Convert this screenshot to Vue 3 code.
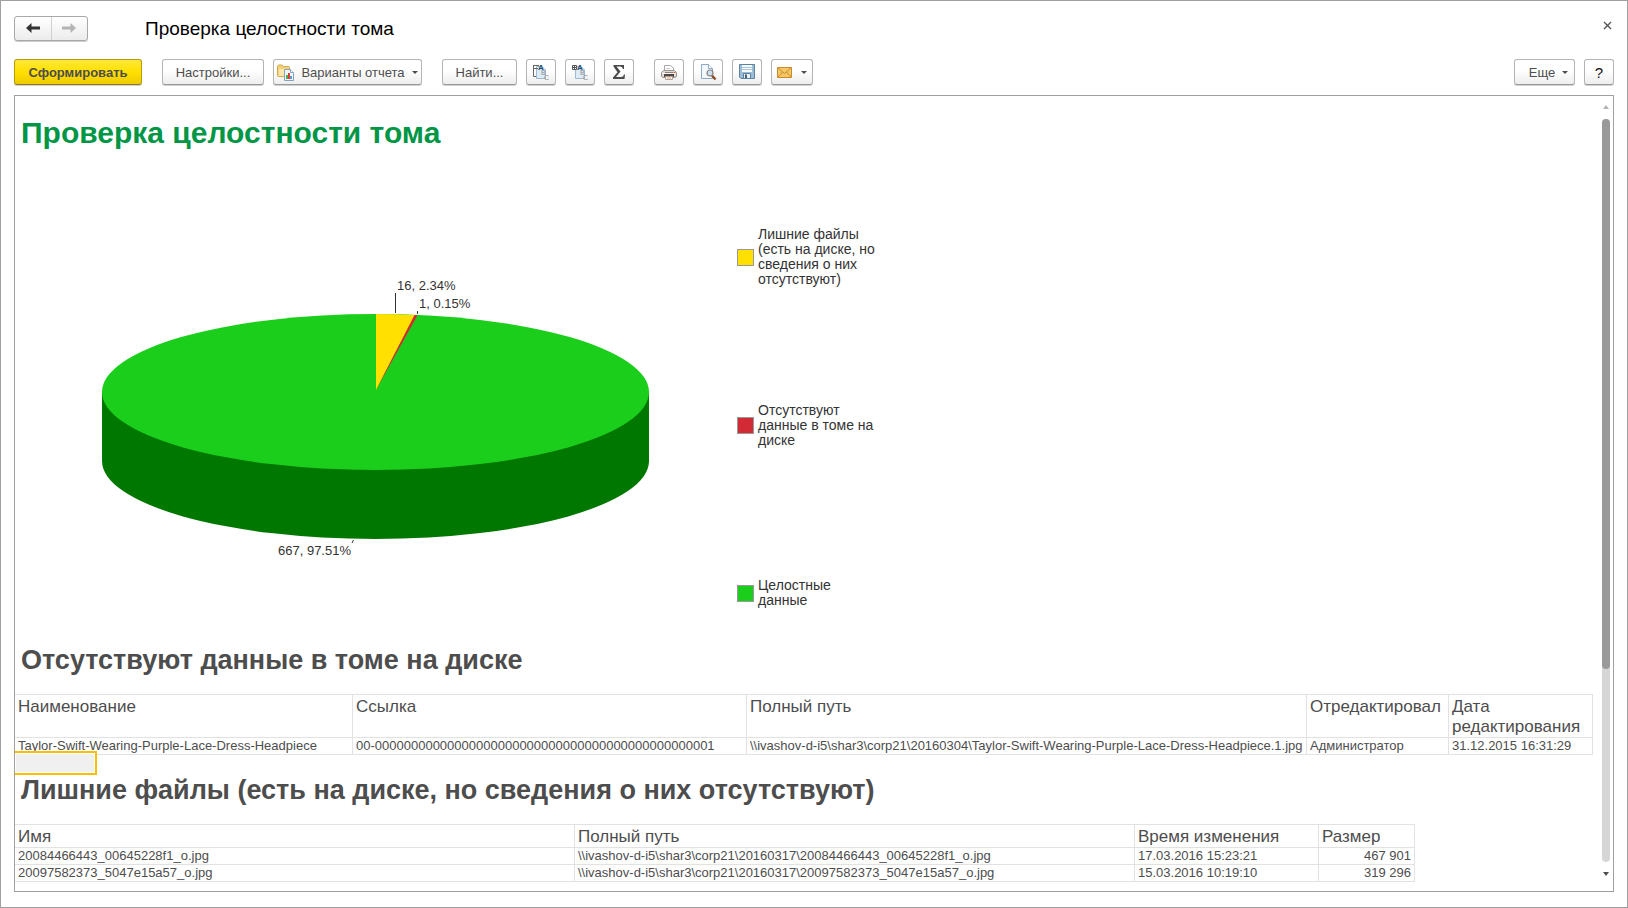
<script setup>
const legend = [
  { id: 'extra', text: 'Лишние файлы (есть на диске, но сведения о них отсутствуют)' },
  { id: 'missing', text: 'Отсутствуют данные в томе на диске' },
  { id: 'whole', text: 'Целостные данные' },
]

const missing = [
  {
    name: 'Taylor-Swift-Wearing-Purple-Lace-Dress-Headpiece',
    link: '00-00000000000000000000000000000000000000000000001',
    path: '\\\\ivashov-d-i5\\shar3\\corp21\\20160304\\Taylor-Swift-Wearing-Purple-Lace-Dress-Headpiece.1.jpg',
    editor: 'Администратор',
    date: '31.12.2015 16:31:29',
  },
]

const extra = [
  {
    name: '20084466443_00645228f1_o.jpg',
    path: '\\\\ivashov-d-i5\\shar3\\corp21\\20160317\\20084466443_00645228f1_o.jpg',
    time: '17.03.2016 15:23:21',
    size: '467 901',
  },
  {
    name: '20097582373_5047e15a57_o.jpg',
    path: '\\\\ivashov-d-i5\\shar3\\corp21\\20160317\\20097582373_5047e15a57_o.jpg',
    time: '15.03.2016 10:19:10',
    size: '319 296',
  },
]
</script>

<template>
  <div class="window">
    <header class="titlebar">
      <div class="nav">
        <button class="nav-btn" type="button" aria-label="Назад">
          <svg width="16" height="12" viewBox="0 0 16 12"><path d="M1 6 6.500 1V4.500H15V7.500H6.500V11Z" fill="#333" /></svg>
        </button>
        <button class="nav-btn" type="button" aria-label="Вперед" disabled>
          <svg width="16" height="12" viewBox="0 0 16 12"><path d="M15 6 9.500 1V4.500H1V7.500H9.500V11Z" fill="#b4b4b4" /></svg>
        </button>
      </div>
      <div class="title">Проверка целостности тома</div>
      <button class="close" type="button" aria-label="Закрыть">
        <svg width="9" height="9" viewBox="0 0 9 9"><path d="M1 1 8 8M8 1 1 8" stroke="#555" stroke-width="1.400" /></svg>
      </button>
    </header>

    <div class="toolbar">
      <button class="btn primary" type="button">Сформировать</button>
      <button class="btn settings" type="button">Настройки...</button>
      <button class="btn variants" type="button">
        <svg width="17" height="17" viewBox="0 0 17 17">
          <path d="M.5 2.500Q.5 1 2 1H5L6.500 2.500H11.500Q12.500 2.500 12.500 3.500V12.500H1.500Q.5 12.500.5 11.500Z" fill="#f3d078" stroke="#d3aa50" />
          <path d="M2 5H12V12H2Z" fill="#fbe8ae" />
          <path d="M7.500 5.500H13.500L16.500 8.500V16.500H7.500Z" fill="#eef5fb" stroke="#86a3c0" />
          <path d="M13.500 5.500V8.500H16.500" fill="#fff" stroke="#86a3c0" />
          <path d="M9 11H11V15H9Z" fill="#4caf50" />
          <path d="M11 9H13V15H11Z" fill="#e03c31" />
          <path d="M13 12H15V15H13Z" fill="#5b9bd5" />
        </svg>
        <span>Варианты отчета</span>
        <i class="caret"></i>
      </button>
      <button class="btn find" type="button">Найти...</button>
      <div class="group">
        <button class="btn icon" type="button" aria-label="Развернуть группы">
          <svg class="letters" width="18" height="18" viewBox="0 0 18 18">
            <path d="M4.500 3.500H10L13.500 7V15.500H4.500Z" fill="#dcebf7" stroke="#9dbad2" />
            <path d="M1 2.500H7M1.500 2V13.500H4M1 5.500H6" fill="none" stroke="#666" />
            <text class="a" x="6" y="7">A</text>
            <text x="9" y="12">B</text>
            <text x="12" y="17">C</text>
          </svg>
        </button>
        <button class="btn icon" type="button" aria-label="Свернуть группы">
          <svg class="letters" width="18" height="18" viewBox="0 0 18 18">
            <path d="M4.500 3.500H10L13.500 7V15.500H4.500Z" fill="#dcebf7" stroke="#9dbad2" />
            <path d="M1.500 2.500H5.500V6.500H1.500ZM3.500 2V7M1 4.500H6" fill="#fff" stroke="#555" />
            <text class="a" x="6" y="7">A</text>
            <text x="9" y="12">B</text>
            <text x="12" y="17">C</text>
          </svg>
        </button>
        <button class="btn icon" type="button" aria-label="Сумма">
          <svg width="14" height="16" viewBox="0 0 14 16">
            <path d="M1.500 1H12V5H11Q10.500 2.500 8.500 2.500H4.500L8.500 7.500L4 13H9Q11.500 13 12 10.500H13L12.500 15H1V13.500L5.500 8.200L1.500 2.500Z" fill="#4a4a4a" />
          </svg>
        </button>
      </div>
      <div class="group output">
        <button class="btn icon" type="button" aria-label="Печать">
          <svg width="16" height="16" viewBox="0 0 16 16">
            <path d="M3.500 7V1.500H9.500L12.500 4V7" fill="#fff" stroke="#a8a8a8" />
            <path d="M5 4.500H9M5 6.500H11" stroke="#ccc" />
            <path d="M2.500 6.500H13.500L15.500 8.500V12.500L14 13.500H2L.5 12.500V8.500Z" fill="#dedad5" stroke="#98928b" />
            <path d="M1 9.500H15" stroke="#f6f4f1" />
            <path d="M4 8.500H12" stroke="#8d7f74" />
            <path d="M3 10H13V13H3Z" fill="#4f4743" />
            <path d="M4.500 12.500H11.500V15.500H4.500Z" fill="#fff" stroke="#b3a59a" />
            <path d="M6 14H10" stroke="#e8956a" />
            <path d="M12.500 8.500H14.500" stroke="#e0622a" />
          </svg>
        </button>
        <button class="btn icon" type="button" aria-label="Предварительный просмотр">
          <svg width="17" height="17" viewBox="0 0 17 17">
            <path d="M1.500.5H8.500L12.500 4.500V14.500H1.500Z" fill="#f4f9fd" stroke="#8ba9c4" />
            <path d="M8.500.5V4.500H12.500" fill="#fff" stroke="#8ba9c4" />
            <path d="M12 11.500 15.500 15.500" stroke="#8a4b22" stroke-width="2.400" />
            <circle cx="10" cy="9" r="3" fill="#c8e2f5" stroke="#8b7f78" stroke-width="1.200" />
          </svg>
        </button>
        <button class="btn icon" type="button" aria-label="Сохранить">
          <svg width="16" height="16" viewBox="0 0 16 16">
            <path d="M.5.5H15.500V14.500H2L.5 13Z" fill="#9dbdd6" stroke="#5b82a2" />
            <path d="M3 1H13V8H3Z" fill="#f6fafd" />
            <path d="M3 3.500H13M3 5.500H13" stroke="#a9c6dc" />
            <path d="M4.500 9.500H11.500V14.500H4.500Z" fill="#eef2f5" stroke="#5b82a2" />
            <path d="M6 10.500H8V14H6Z" fill="#3d617e" />
          </svg>
        </button>
        <button class="btn mail" type="button" aria-label="Отправить">
          <svg width="15" height="11" viewBox="0 0 15 11">
            <path d="M.5.5H14.500V10.500H.5Z" fill="#f7c766" stroke="#c98a2b" />
            <path d="M1 1 7.500 6.500 14 1M1 10 5.500 5M14 10 9.500 5" fill="none" stroke="#c98a2b" />
          </svg>
          <i class="caret"></i>
        </button>
      </div>
      <div class="group right">
        <button class="btn more" type="button"><span>Еще</span><i class="caret"></i></button>
        <button class="btn icon help" type="button">?</button>
      </div>
    </div>

    <main class="report">
      <div class="sheet">
        <h1>Проверка целостности тома</h1>

        <section class="chart">
          <svg class="pie" width="664" height="489" viewBox="0 0 664 489">
            <path d="M87 241V310A273.500 78 0 0 0 634 310V241Z" fill="#007800" />
            <ellipse cx="360.500" cy="241" rx="273.500" ry="78" fill="#1bce1b" />
            <path d="M361 239V163Q381 163 400 164Z" fill="#ffe000" />
            <path d="M361 239 399.500 164 402.500 164.300Z" fill="#d22b35" />
            <path d="M380.500 142V162M402.500 160V163M338.500 389 337 392" stroke="#333" fill="none" />
            <text x="382" y="139">16, 2.34%</text>
            <text x="404" y="157">1, 0.15%</text>
            <text x="336" y="404" text-anchor="end">667, 97.51%</text>
          </svg>
          <ul class="legend">
            <li v-for="item in legend" :key="item.id">
              <i class="swatch" :class="item.id"></i>
              <span>{{ item.text }}</span>
            </li>
          </ul>
        </section>

        <h2>Отсутствуют данные в томе на диске</h2>
        <table class="missing-table">
          <colgroup><col class="c338" /><col class="c394" /><col class="c560" /><col class="c142" /><col class="c144" /></colgroup>
          <thead>
            <tr><th>Наименование</th><th>Ссылка</th><th>Полный путь</th><th>Отредактировал</th><th>Дата редактирования</th></tr>
          </thead>
          <tbody>
            <tr v-for="row in missing" :key="row.link">
              <td>{{ row.name }}</td><td>{{ row.link }}</td><td>{{ row.path }}</td><td>{{ row.editor }}</td><td>{{ row.date }}</td>
            </tr>
          </tbody>
        </table>

        <div class="gap-row"><div class="selection"></div></div>

        <h2>Лишние файлы (есть на диске, но сведения о них отсутствуют)</h2>
        <table class="extra-table">
          <colgroup><col class="c560" /><col class="c560" /><col class="c184" /><col class="c96" /></colgroup>
          <thead>
            <tr><th>Имя</th><th>Полный путь</th><th>Время изменения</th><th>Размер</th></tr>
          </thead>
          <tbody>
            <tr v-for="row in extra" :key="row.name">
              <td>{{ row.name }}</td><td>{{ row.path }}</td><td>{{ row.time }}</td><td class="num">{{ row.size }}</td>
            </tr>
          </tbody>
        </table>
      </div>

      <div class="scrollbar">
        <i class="arrow up"></i>
        <div class="track"><div class="thumb"></div></div>
        <i class="arrow down"></i>
      </div>
    </main>
  </div>
</template>

<style>
body {
  margin: 0;
}
</style>

<style scoped>
.window {
  box-sizing: border-box;
  height: 100vh;
  padding: 14px 13px 15px;
  border: 1px solid #a0a0a0;
  background: #fff;
  color: #4d4d4d;
  display: flex;
  flex-direction: column;
  font-family: "Liberation Sans", Arial, sans-serif;
  font-size: 13px;
}

button {
  font: inherit;
  color: inherit;
  padding: 0;
}

.titlebar {
  display: flex;
  align-items: center;
  height: 26px;
}

.nav {
  display: flex;
  box-sizing: border-box;
  width: 74px;
  height: 25px;
  border: 1px solid #a8a8a8;
  border-radius: 3px;
  background: linear-gradient(#fff, #ececec);
  box-shadow: 0 1px 0 #ccc;
}

.nav-btn {
  flex: 1;
  display: flex;
  align-items: center;
  justify-content: center;
  border: 0;
  background: none;
}

.nav-btn + .nav-btn {
  border-left: 1px solid #d0d0d0;
}

.title {
  flex: 1;
  margin-left: 57px;
  padding-top: 2px;
  color: #000;
  font-size: 19px;
  line-height: 24px;
}

.close {
  display: flex;
  margin: 0 2px 6px 0;
  border: 0;
  background: none;
}

.toolbar {
  display: flex;
  margin-top: 18px;
}

.btn {
  display: flex;
  align-items: center;
  justify-content: center;
  box-sizing: border-box;
  height: 26px;
  border: 1px solid #b4b4b4;
  border-bottom-color: #989898;
  border-radius: 3px;
  background: linear-gradient(#fff 40%, #eee);
  box-shadow: 0 1px 0 #d0d0d0;
  white-space: nowrap;
}

.primary {
  width: 128px;
  border-color: #b89c10;
  border-bottom-color: #8c7a20;
  background: linear-gradient(#ffe838, #ffe000 50%, #efca00);
  font-weight: bold;
}

.settings {
  width: 102px;
  margin-left: 20px;
}

.variants {
  gap: 7px;
  width: 149px;
  margin-left: 9px;
}

.find {
  width: 75px;
  margin-left: 20px;
}

.group {
  display: flex;
  gap: 9px;
  margin-left: 9px;
}

.output {
  margin-left: 20px;
}

.right {
  margin-left: auto;
}

.icon {
  width: 30px;
}

.letters text {
  fill: #8c8c8c;
  font-size: 7px;
}

.letters .a {
  fill: #1d4a73;
  font-size: 8px;
  font-weight: bold;
}

.mail {
  gap: 9px;
  width: 42px;
}

.more {
  gap: 7px;
  width: 61px;
  padding-left: 8px;
}

.help {
  color: #111;
  font-size: 15px;
}

.caret {
  border: 3px solid transparent;
  border-top-color: #4d4d4d;
  border-bottom: 0;
}

.report {
  flex: 1;
  display: flex;
  min-height: 0;
  margin-top: 10px;
  border: 1px solid #a0a0a0;
}

.sheet {
  flex: 1;
  min-width: 0;
  overflow: hidden;
}

h1,
h2 {
  margin: 0;
  padding-left: 6px;
  line-height: 36px;
  white-space: nowrap;
}

h1 {
  padding-top: 19px;
  color: #009646;
  font-size: 30px;
}

h2 {
  margin-bottom: 16px;
  padding-top: 1px;
  font-size: 27px;
}

.chart {
  display: flex;
  gap: 58px;
  height: 490px;
}

.pie {
  flex: none;
}

.pie text {
  fill: #333;
  font-size: 13px;
}

.legend {
  display: grid;
  grid-template-rows: repeat(3, 168px);
  width: 141px;
  margin: 0;
  padding: 22px 0 0;
  list-style: none;
  color: #333;
  font-size: 14px;
  line-height: 15px;
}

.legend li {
  display: flex;
  align-items: center;
  gap: 4px;
}

.swatch {
  flex: none;
  box-sizing: border-box;
  width: 17px;
  height: 17px;
  border: 1px solid #999;
}

.extra {
  background: #ffe000;
}

.missing {
  background: #d22b35;
}

.whole {
  background: #1bce1b;
}

table {
  table-layout: fixed;
  border-spacing: 0;
  border-top: 1px solid #e2e2e2;
}

.missing-table {
  width: 1578px;
}

.extra-table {
  width: 1400px;
}

.c96 { width: 96px; }
.c142 { width: 142px; }
.c144 { width: 144px; }
.c184 { width: 184px; }
.c338 { width: 338px; }
.c394 { width: 394px; }
.c560 { width: 560px; }

th,
td {
  padding: 0 3px;
  border: solid #e2e2e2;
  border-width: 0 1px 1px 0;
  text-align: left;
  vertical-align: top;
}

th {
  padding-top: 2px;
  font-size: 17px;
  font-weight: normal;
  line-height: 20px;
}

td {
  line-height: 16px;
  white-space: nowrap;
}

td.num {
  text-align: right;
}

.gap-row {
  position: relative;
  height: 16px;
}

.selection {
  position: absolute;
  top: -4px;
  left: 0;
  box-sizing: border-box;
  width: 82px;
  height: 24px;
  border: 2px solid #f8c000;
  border-left: 0;
  background: #f0f0f0;
  box-shadow: inset 0 0 0 1px #fff;
}

.scrollbar {
  flex: none;
  display: flex;
  flex-direction: column;
  align-items: center;
  gap: 10px;
  width: 8px;
  padding: 9px 3px 15px 8px;
}

.track {
  flex: 1;
  width: 8px;
  border-radius: 4px;
  background: #d6d6d6;
}

.thumb {
  height: 74%;
  border-radius: 4px;
  background: #999;
}

.arrow {
  border: 3px solid transparent;
}

.up {
  border-top: 0;
  border-bottom: 4px solid #b4b4b4;
}

.down {
  border-top: 4px solid #4d4d4d;
  border-bottom: 0;
}
</style>
